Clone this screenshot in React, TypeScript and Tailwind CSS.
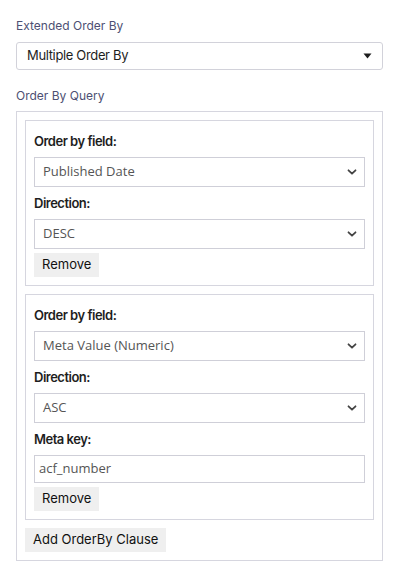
import React from "react";

const inter = { fontFamily: "Inter, 'Liberation Sans', sans-serif" };

function Chevron() {
  return (
    <svg width="10" height="7" viewBox="0 0 10 7" className="absolute right-[7px] top-1/2 -translate-y-1/2 pointer-events-none">
      <path d="M1.5 1.8 L5 5.2 L8.5 1.8" fill="none" stroke="#444" strokeWidth="1.8" strokeLinecap="round" strokeLinejoin="round" />
    </svg>
  );
}

function FieldSelect({ value }: { value: string }) {
  return (
    <div className="relative h-[30px] border border-[#cfcfd8] bg-white flex items-center pl-[8px] font-['Open_Sans',sans-serif] text-[13px] text-[#555]">
      <span>{value}</span>
      <Chevron />
    </div>
  );
}

function Label({ children, first }: { children: React.ReactNode; first?: boolean }) {
  return (
    <div className={`${first ? "mt-[2px]" : "mt-[6px]"} mb-[6px] leading-5 text-[13px] tracking-[-0.5px] font-semibold text-[#1e1e1e] font-['Inter',sans-serif]`}>
      {children}
    </div>
  );
}

function Btn({ children }: { children: React.ReactNode }) {
  return (
    <div className="flex h-[24px] items-center px-[8px] bg-[#efefef] text-[13px] text-[#111] font-['Inter',sans-serif]">
      {children}
    </div>
  );
}

export default function App() {
  return (
    <div className="w-[399px] h-[571px] bg-white px-4 pt-[18px]" style={inter}>
      <div className="leading-4 text-[12px] text-[#4d5073]">Extended Order By</div>
      <div className="mt-[8px] h-[28px] border border-[#d2d2da] rounded-[3px] flex items-center pl-[10px] pr-[10px] text-[13px] tracking-[-0.35px] text-[#1e1e1e]">
        <span className="flex-1">Multiple Order By</span>
        <svg width="9" height="6" viewBox="0 0 9 6">
          <path d="M0.5 0.5 L8.5 0.5 L4.5 5.5 Z" fill="#1e1e1e" />
        </svg>
      </div>
      <div className="mt-[18px] leading-4 text-[12px] text-[#4d5073]">Order By Query</div>
      <div className="mt-[7px] border border-[#d6d6df] p-2 flex flex-col items-start gap-2">
        <div className="self-stretch border border-[#d6d6df] p-2 flex flex-col items-stretch">
          <Label first>Order by field:</Label>
          <FieldSelect value="Published Date" />
          <Label>Direction:</Label>
          <FieldSelect value="DESC" />
          <div className="mt-[4px] flex"><Btn>Remove</Btn></div>
        </div>
        <div className="self-stretch border border-[#d6d6df] p-2 flex flex-col items-stretch">
          <Label first>Order by field:</Label>
          <FieldSelect value="Meta Value (Numeric)" />
          <Label>Direction:</Label>
          <FieldSelect value="ASC" />
          <Label>Meta key:</Label>
          <div className="h-[28px] border border-[#cfcfd8] bg-white flex items-center pl-[4px] font-['Open_Sans',sans-serif] text-[13px] text-[#555]">
            acf_number
          </div>
          <div className="mt-[4px] flex"><Btn>Remove</Btn></div>
        </div>
        <Btn>Add OrderBy Clause</Btn>
      </div>
    </div>
  );
}
